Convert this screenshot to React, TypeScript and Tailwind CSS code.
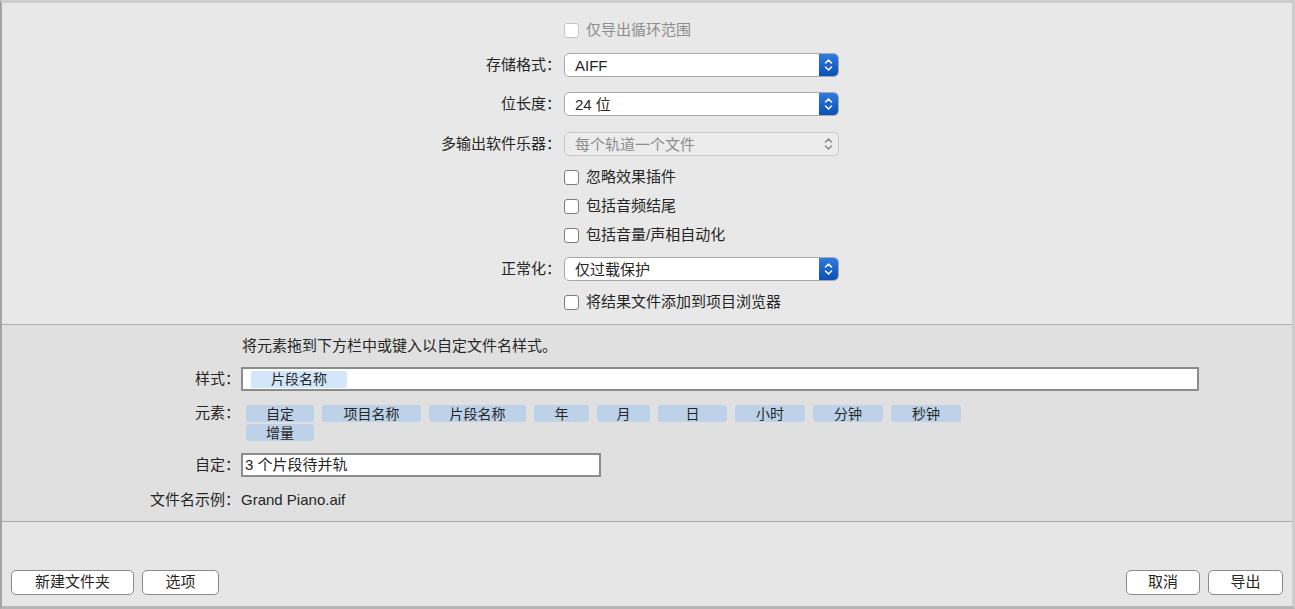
import React from 'react';

const font = { fontFamily: '"Liberation Sans", "Noto Sans CJK SC", sans-serif' };

function Stepper({ disabled }: { disabled?: boolean }) {
  return (
    <div
      className={
        disabled
          ? 'flex h-full w-[19px] items-center justify-center'
          : 'flex h-full w-[19px] items-center justify-center rounded-r-[4px] bg-gradient-to-b from-[#2f7be0] to-[#0a50b5]'
      }
    >
      <svg width="9" height="14" viewBox="0 0 9 14" fill="none">
        <path
          d="M1.5 5 L4.5 2 L7.5 5 M1.5 9 L4.5 12 L7.5 9"
          stroke={disabled ? '#8a8a8a' : '#ffffff'}
          strokeWidth="1.5"
          strokeLinecap="round"
          strokeLinejoin="round"
        />
      </svg>
    </div>
  );
}

function Select({ value, disabled }: { value: string; disabled?: boolean }) {
  return (
    <div
      className={
        'flex h-[24px] w-[275px] items-center overflow-hidden rounded-[5px] border ' +
        (disabled ? 'border-[#c8c8c8] bg-[#ececec] text-[#8c8c8c]' : 'border-[#a9a9a9] bg-white text-[#262626]')
      }
    >
      <div className="flex-1 pl-[10px] leading-none">{value}</div>
      <Stepper disabled={disabled} />
    </div>
  );
}

function Checkbox({ label, disabled }: { label: string; disabled?: boolean }) {
  return (
    <div className="flex h-[20px] items-center">
      <div
        className={
          'h-[15px] w-[15px] rounded-[3px] border bg-white ' +
          (disabled ? 'border-[#c4c4c4]' : 'border-[#7d7d7d]')
        }
      />
      <span className={'ml-[7px] ' + (disabled ? 'text-[#8d8d8d]' : 'text-[#262626]')}>{label}</span>
    </div>
  );
}

function Row({ label, children, className }: { label?: string; children: React.ReactNode; className?: string }) {
  return (
    <div className={'flex items-center ' + (className ?? '')}>
      <div className="w-[562px] shrink-0 pr-[3px] text-right text-[#262626]">{label}</div>
      {children}
    </div>
  );
}

function Chip({ text, w }: { text: string; w: string }) {
  return (
    <div className={'flex h-[17px] items-center justify-center rounded-[3px] bg-[#bdd2e8] text-[14px] leading-none text-[#262626] ' + w}>
      {text}
    </div>
  );
}

function Button({ text, w }: { text: string; w: string }) {
  return (
    <div className={'flex h-[25px] items-center justify-center rounded-[5px] border border-[#8a8a8a] bg-white text-[#262626] ' + w}>
      {text}
    </div>
  );
}

export default function App() {
  return (
    <div
      style={font}
      className="flex h-[609px] w-[1295px] flex-col border-t-[3px] border-r-[3px] border-b-[3px] border-l-2 border-t-[#cdcdcd] border-r-[#cdcdcd] border-b-[#b5b5b5] border-l-[#a3a3a3] bg-[#e8e8e8] text-[15px]"
    >
      {/* Export options */}
      <div className="flex h-[321px] flex-col bg-[#e8e8e8]">
        <Row className="mt-[17px] h-[20px]">
          <Checkbox label="仅导出循环范围" disabled />
        </Row>
        <Row label="存储格式：" className="mt-[13px]">
          <Select value="AIFF" />
        </Row>
        <Row label="位长度：" className="mt-[15px]">
          <Select value="24 位" />
        </Row>
        <Row label="多输出软件乐器：" className="mt-[16px]">
          <Select value="每个轨道一个文件" disabled />
        </Row>
        <Row className="mt-[11px]">
          <Checkbox label="忽略效果插件" />
        </Row>
        <Row className="mt-[9px]">
          <Checkbox label="包括音频结尾" />
        </Row>
        <Row className="mt-[9px]">
          <Checkbox label="包括音量/声相自动化" />
        </Row>
        <Row label="正常化：" className="mt-[12px]">
          <Select value="仅过载保护" />
        </Row>
        <Row className="mt-[11px]">
          <Checkbox label="将结果文件添加到项目浏览器" />
        </Row>
      </div>

      <div className="h-px bg-[#b0b0b0]" />

      {/* File name pattern */}
      <div className="flex h-[196px] flex-col bg-[#e0e0e0] text-[#262626]">
        <div className="mt-[11px] flex h-[20px] items-center pl-[240px]">将元素拖到下方栏中或键入以自定文件名样式。</div>
        <div className="mt-[11px] flex items-center">
          <div className="w-[239px] shrink-0 pr-[1px] text-right">样式：</div>
          <div className="flex h-[24px] w-[958px] items-center border-2 border-[#8c8c8c] bg-white pl-[8px]">
            <div className="flex h-[17px] w-[96px] items-center justify-center rounded-[2px] bg-[#d3e6fa] text-[14px] leading-none">
              片段名称
            </div>
          </div>
        </div>
        <div className="mt-[14px] flex items-start">
          <div className="flex h-[17px] w-[239px] shrink-0 items-center justify-end pr-[1px]">元素：</div>
          <div className="ml-[5px] flex flex-col gap-[2px]">
            <div className="flex gap-[8px]">
              <Chip text="自定" w="w-[68px]" />
              <Chip text="项目名称" w="w-[99px]" />
              <Chip text="片段名称" w="w-[97px]" />
              <Chip text="年" w="w-[55px]" />
              <Chip text="月" w="w-[53px]" />
              <Chip text="日" w="w-[69px]" />
              <Chip text="小时" w="w-[70px]" />
              <Chip text="分钟" w="w-[70px]" />
              <Chip text="秒钟" w="w-[70px]" />
            </div>
            <div className="flex">
              <Chip text="增量" w="w-[68px]" />
            </div>
          </div>
        </div>
        <div className="mt-[12px] flex items-center">
          <div className="w-[239px] shrink-0 pr-[1px] text-right">自定：</div>
          <div className="flex h-[24px] w-[360px] items-center border-2 border-[#8c8c8c] bg-white pl-[2px]">
            3 个片段待并轨
          </div>
        </div>
        <div className="mt-[13px] flex h-[20px] items-center">
          <div className="w-[239px] shrink-0 pr-[1px] text-right">文件名示例：</div>
          <div>Grand Piano.aif</div>
        </div>
      </div>

      <div className="h-px bg-[#a8a8a8]" />

      {/* Buttons */}
      <div className="flex flex-1 items-end bg-[#e6e6e6] pb-[11px] pl-[9px] pr-[9px]">
        <div className="flex gap-[8px]">
          <Button text="新建文件夹" w="w-[123px]" />
          <Button text="选项" w="w-[77px]" />
        </div>
        <div className="flex-1" />
        <div className="flex gap-[8px]">
          <Button text="取消" w="w-[74px]" />
          <Button text="导出" w="w-[75px]" />
        </div>
      </div>
    </div>
  );
}
